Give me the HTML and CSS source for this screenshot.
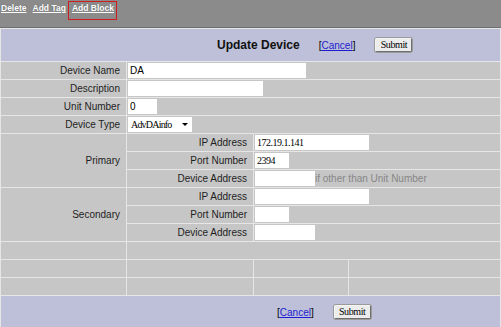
FILE: index.html
```html
<!DOCTYPE html>
<html>
<head>
<meta charset="utf-8">
<title>Update Device</title>
<link rel="stylesheet" href="styles.css">
</head>
<body>
<div class="topbar">
  <a href="#" class="tlink">Delete</a>
  <a href="#" class="tlink tag">Add Tag</a>
  <span class="hl"><a href="#" class="tlink">Add Block</a></span>
</div>
<table class="form">
  <colgroup><col class="c1"><col class="c2"><col class="c3"><col class="c4"></colgroup>
  <tr class="head">
    <td colspan="4">
      <div class="bar title-bar">
        <span class="title">Update Device</span>
        <span class="cancel">[<a href="#">Cancel</a>]</span>
        <button class="btn" type="button">Submit</button>
      </div>
    </td>
  </tr>
  <tr>
    <td class="lbl">Device Name</td>
    <td colspan="3"><div class="field"><input class="inp sans w-name" value="DA"></div></td>
  </tr>
  <tr>
    <td class="lbl">Description</td>
    <td colspan="3"><div class="field"><input class="inp sans w-desc" value=""></div></td>
  </tr>
  <tr>
    <td class="lbl">Unit Number</td>
    <td colspan="3"><div class="field"><input class="inp sans w-unit" value="0"></div></td>
  </tr>
  <tr>
    <td class="lbl">Device Type</td>
    <td colspan="3"><div class="field"><span class="select">AdvDAinfo<svg class="arrow" width="6" height="3" viewBox="0 0 6 3"><path d="M0 0H6L3 3Z" fill="#000"/></svg></span></div></td>
  </tr>
  <tr>
    <td class="lbl group" rowspan="3">Primary</td>
    <td class="lbl">IP Address</td>
    <td colspan="2"><div class="field"><input class="inp serif w-ip" value="172.19.1.141"></div></td>
  </tr>
  <tr>
    <td class="lbl">Port Number</td>
    <td colspan="2"><div class="field"><input class="inp serif w-port" value="2394"></div></td>
  </tr>
  <tr>
    <td class="lbl">Device Address</td>
    <td colspan="2"><div class="field"><input class="inp serif w-addr" value=""><span class="note">if other than Unit Number</span></div></td>
  </tr>
  <tr>
    <td class="lbl group" rowspan="3">Secondary</td>
    <td class="lbl">IP Address</td>
    <td colspan="2"><div class="field"><input class="inp serif w-ip" value=""></div></td>
  </tr>
  <tr>
    <td class="lbl">Port Number</td>
    <td colspan="2"><div class="field"><input class="inp serif w-port" value=""></div></td>
  </tr>
  <tr>
    <td class="lbl">Device Address</td>
    <td colspan="2"><div class="field"><input class="inp serif w-addr" value=""></div></td>
  </tr>
  <tr>
    <td></td>
    <td colspan="3"></td>
  </tr>
  <tr>
    <td></td><td></td><td></td><td></td>
  </tr>
  <tr>
    <td></td><td></td><td></td><td></td>
  </tr>
  <tr class="foot">
    <td colspan="4">
      <div class="bar foot-bar">
        <span class="cancel">[<a href="#">Cancel</a>]</span>
        <button class="btn" type="button">Submit</button>
      </div>
    </td>
  </tr>
</table>
</body>
</html>
```
FILE: styles.css
```css
html, body {
  margin: 0;
  padding: 0;
  background: #bdc0d8;
}
body {
  width: 501px;
  font-family: "Liberation Sans", Arial, sans-serif;
  overflow: hidden;
}

/* top action bar */
.topbar {
  height: 27px;
  background: #8b8b8b;
  border-bottom: 1px solid #6f6f6f;
  display: flex;
  align-items: flex-start;
  padding-left: 1px;
  font-size: 8.5px;
  line-height: 1;
}
.tlink {
  display: block;
  font: bold 8.5px/9px "Liberation Sans", Arial, sans-serif;
  color: #ffffff;
  text-decoration: underline;
  margin-top: 4px;
  text-shadow: 0 0 1px #5e5e5e;
}
.tag {
  margin-left: 6px;
}
.hl {
  display: flex;
  margin-left: 2px;
  margin-top: 1px;
  border: 1px solid #d01c1c;
  padding: 2px 2px 6px 3px;
}
.hl .tlink {
  margin-top: 0;
}

/* form table */
.form {
  border-collapse: separate;
  border-spacing: 1px;
  background: #e6e6e6;
  width: 501px;
  table-layout: fixed;
}
.c1 { width: 125px; }
.c2 { width: 126px; }
.c3 { width: 94px; }
.c4 { width: 151px; }

.form td {
  padding: 0;
  height: 17px;
  background: #c6c6c6;
  font-size: 10px;
  color: #1e1e1e;
  vertical-align: middle;
}
.form .lbl {
  text-align: right;
  padding-right: 6px;
  white-space: nowrap;
}
.form .head td,
.form .foot td {
  background: #bdc0d8;
  height: 32px;
}

.bar {
  display: flex;
  align-items: center;
}
.title-bar {
  padding-left: 216px;
}
.foot-bar {
  padding-left: 276px;
}
.title {
  font-weight: bold;
  font-size: 12px;
  color: #111;
  margin-right: 19px;
}
.cancel {
  font-size: 10px;
  color: #000;
}
.cancel a {
  color: #1c1cd0;
  text-decoration: underline;
}
.btn {
  margin-left: 20px;
  width: 37px;
  height: 14px;
  padding: 0;
  font: 10px/1 "Liberation Serif", "Times New Roman", serif;
  letter-spacing: -0.4px;
  color: #000;
  background: #ececec;
  border: 1px solid;
  border-color: #f4f4f4 #6e6e6e #6e6e6e #f4f4f4;
  border-radius: 2px;
  box-shadow: 0 0 0 1px #9a9a9a;
}

/* fields */
.field {
  display: flex;
  align-items: center;
  padding-left: 1px;
}
.inp {
  display: block;
  box-sizing: border-box;
  height: 15px;
  border: 0;
  margin: 0;
  padding: 0 2px;
  background: #ffffff;
  color: #000;
  outline: none;
}
.sans {
  font: 10px "Liberation Sans", Arial, sans-serif;
}
.serif {
  font: 10px "Liberation Serif", "Times New Roman", serif;
  letter-spacing: -0.5px;
}
.w-name { width: 178px; }
.w-desc { width: 135px; }
.w-unit { width: 29px; }
.w-ip { width: 114px; }
.w-port { width: 34px; }
.w-addr { width: 60px; }

.select {
  display: inline-flex;
  align-items: center;
  box-sizing: border-box;
  width: 64px;
  height: 15px;
  padding-left: 3px;
  background: #ffffff;
  font: 10px "Liberation Serif", "Times New Roman", serif;
  letter-spacing: -0.8px;
  color: #000;
}
.arrow {
  margin-left: auto;
  margin-right: 4px;
}
.note {
  color: #878787;
  font-size: 10px;
  white-space: nowrap;
}
```
